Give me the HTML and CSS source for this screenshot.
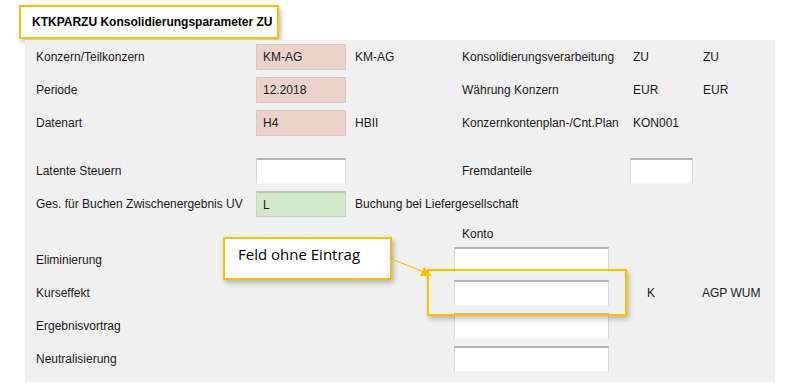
FILE: index.html
```html
<!DOCTYPE html>
<html lang="de">
<head>
<meta charset="utf-8">
<title>KTKPARZU Konsolidierungsparameter ZU</title>
<link rel="stylesheet" href="styles.css">
</head>
<body>
<div class="page">
  <div class="title-wrap">
    <div class="title">KTKPARZU Konsolidierungsparameter ZU</div>
  </div>
  <div class="panel">
    <div class="row g1">
      <span>Konzern/Teilkonzern</span>
      <span class="field pink">KM-AG</span>
      <span>KM-AG</span>
      <span>Konsolidierungsverarbeitung</span>
      <span>ZU</span>
      <span>ZU</span>
    </div>
    <div class="row g1">
      <span>Periode</span>
      <span class="field pink">12.2018</span>
      <span></span>
      <span>Währung Konzern</span>
      <span>EUR</span>
      <span>EUR</span>
    </div>
    <div class="row g1">
      <span>Datenart</span>
      <span class="field pink">H4</span>
      <span>HBII</span>
      <span>Konzernkontenplan-/Cnt.Plan</span>
      <span>KON001</span>
      <span></span>
    </div>
    <div class="row g1 sec2">
      <span>Latente Steuern</span>
      <span class="field white"></span>
      <span></span>
      <span>Fremdanteile</span>
      <span class="field white small"></span>
      <span></span>
    </div>
    <div class="row g2">
      <span>Ges. für Buchen Zwischenergebnis UV</span>
      <span class="field green">L</span>
      <span>Buchung bei Liefergesellschaft</span>
    </div>
    <div class="konto-head g3">
      <span></span>
      <span class="konto">Konto</span>
    </div>
    <div class="row g3">
      <span>Eliminierung</span>
      <span class="field white wide"></span>
      <span></span>
      <span></span>
    </div>
    <div class="row g3">
      <span>Kurseffekt</span>
      <span class="field white wide"></span>
      <span>K</span>
      <span>AGP WUM</span>
    </div>
    <div class="row g3">
      <span>Ergebnisvortrag</span>
      <span class="field white wide"></span>
      <span></span>
      <span></span>
    </div>
    <div class="row g3">
      <span>Neutralisierung</span>
      <span class="field white wide"></span>
      <span></span>
      <span></span>
    </div>
  </div>

  <div class="callout">Feld ohne Eintrag</div>
  <svg class="arrow" width="50" height="24" viewBox="0 0 50 24">
    <line x1="1" y1="2" x2="36" y2="16" stroke="#FFC000" stroke-width="1.2"/>
    <polygon points="44,20 32,20 36,11" fill="#FFC000"/>
  </svg>
  <div class="highlight"></div>
</div>
</body>
</html>
```
FILE: styles.css
```css
html, body {
  margin: 0;
  padding: 0;
  background: #ffffff;
}
body {
  font-family: "Liberation Sans", Arial, sans-serif;
  font-size: 12px;
  color: #1a1a1a;
}
.page {
  position: relative;
  width: 800px;
  height: 391px;
}
.title-wrap {
  padding: 5px 0 0 19px;
  height: 40px;
  box-sizing: border-box;
}
.title {
  width: 260px;
  height: 34px;
  box-sizing: border-box;
  border: 2px solid #FFC000;
  box-shadow: 2px 3px 5px rgba(0,0,0,0.25);
  padding-left: 11px;
  display: flex;
  align-items: center;
  font-weight: bold;
  font-size: 12px;
  color: #000;
  background: #fff;
}
.panel {
  margin-left: 25px;
  width: 750px;
  height: 342px;
  box-sizing: border-box;
  background: #F0F0F0;
  padding: 4px 0 0 11px;
}
.row {
  display: grid;
  height: 26px;
  align-items: center;
  margin-bottom: 7px;
  white-space: nowrap;
}
.g1 {
  grid-template-columns: 220px 99px 107px 171px 70px 1fr;
}
.g2 {
  grid-template-columns: 220px 99px 1fr;
}
.g3 {
  grid-template-columns: 418px 193px 55px 1fr;
}
.sec2 {
  margin-top: 22px;
}
.field {
  box-sizing: border-box;
  height: 26px;
  width: 90px;
  display: flex;
  align-items: center;
  padding-left: 6px;
}
.pink {
  background: #EBD3CC;
  border: 1px solid #DCC8C3;
}
.green {
  background: #D3E7CB;
  border: 1px solid #C5D6BE;
  border-top: 2px solid #B8C8B2;
}
.white {
  background: #ffffff;
  border-left: 1px solid #D8D8D8;
  border-right: 1px solid #D8D8D8;
  border-bottom: 1px solid #F4F4F4;
  border-top: 2px solid #B4B4B4;
}
.small {
  width: 63px;
  margin-left: -3px;
}
.wide {
  width: 155px;
}
.konto-head {
  display: grid;
  height: 17px;
  align-items: center;
  margin: 8px 0 5px;
}
.konto {
  padding-left: 8px;
}
.callout {
  position: absolute;
  left: 223px;
  top: 237px;
  width: 169px;
  height: 43px;
  box-sizing: border-box;
  border: 2px solid #FFC000;
  background: #fff;
  box-shadow: 2px 3px 5px rgba(0,0,0,0.25);
  font-family: "Open Sans", "Noto Sans", sans-serif;
  font-size: 15px;
  color: #000;
  padding: 5px 0 0 13px;
}
.arrow {
  position: absolute;
  left: 388px;
  top: 256px;
}
.highlight {
  position: absolute;
  left: 427px;
  top: 269px;
  width: 200px;
  height: 47px;
  box-sizing: border-box;
  border: 2.5px solid #FFC000;
  box-shadow: 2px 3px 5px rgba(0,0,0,0.25);
}
```
